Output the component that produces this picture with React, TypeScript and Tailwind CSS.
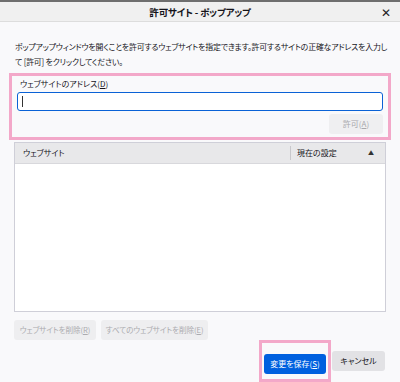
import * as React from "react";

const jp = "font-['Noto_Sans_CJK_JP','Noto_Sans',sans-serif] [font-feature-settings:'palt']";

export default function App() {
  return (
    <div className={`w-[400px] h-[382px] bg-[#f9f9fb] text-[#15141a] flex flex-col overflow-hidden ${jp}`}>
      {/* window top edge */}
      <div className="h-[2px] bg-[#6e6e6e]" />

      {/* title bar */}
      <div className="relative h-[21px] bg-[#f0f0f0] border-b border-[#dddddd] flex items-center justify-center">
        <span className="text-[9.5px] font-bold tracking-[-0.2px]">許可サイト - ポップアップ</span>
        <span className="absolute right-[9px] top-[3px] text-[12px] leading-[14px] text-[#222]">✕</span>
      </div>

      {/* description */}
      <div className="px-[15px] pt-[17px] text-[7.9px] leading-[15px] tracking-[-0.18px] whitespace-nowrap">
        <p>ポップアップウィンドウを開くことを許可するウェブサイトを指定できます。許可するサイトの正確なアドレスを入力し</p>
        <p>て [許可] をクリックしてください。</p>
      </div>

      {/* address box (highlighted) */}
      <div className="mx-[9px] mt-[4px] border-[3px] border-[#f3a8c9] px-[5px] pt-[2px] pb-[3px] flex flex-col">
        <label className="text-[8px] leading-[12px] pl-[3px]">
          ウェブサイトのアドレス(<span className="underline">D</span>)
        </label>
        <div className="mt-[2px] h-[19px] rounded-[3px] border-[1.5px] border-[#0a62d6] bg-white flex items-center pl-[4px]">
          <span className="w-px h-[11px] bg-[#333]" />
        </div>
        <div className="flex justify-end mt-[3px]">
          <button className="w-[54px] h-[20px] rounded-[3px] bg-[#efeff1] text-[8px] text-[#a8a8ac]">
            許可(<span className="underline">A</span>)
          </button>
        </div>
      </div>

      {/* site list */}
      <div className="mx-[14px] mt-[2px] h-[175px] border border-[#cfcfd8] bg-white flex flex-col">
        <div className="h-[21px] bg-[#e8e8ea] border-b border-[#d8d8dc] flex items-center text-[8px]">
          <div className="flex-1 pl-[8px]">ウェブサイト</div>
          <div className="w-[95px] h-[14px] border-l border-[#c8c8cc] flex items-center justify-between pl-[6px] pr-[11px]">
            <span>現在の設定</span>
            <span className="text-[6px] leading-none text-[#333]">▲</span>
          </div>
        </div>
        <div className="flex-1" />
      </div>

      {/* remove buttons */}
      <div className="mx-[14px] mt-[8px] flex gap-[5px]">
        <button className="h-[20px] w-[82px] rounded-[3px] bg-[#eeeef0] text-[7.6px] tracking-[-0.1px] text-[#ababaf]">
          ウェブサイトを削除(<span className="underline">R</span>)
        </button>
        <button className="h-[20px] w-[107px] rounded-[3px] bg-[#eeeef0] text-[7.6px] tracking-[-0.1px] text-[#ababaf]">
          すべてのウェブサイトを削除(<span className="underline">E</span>)
        </button>
      </div>

      {/* footer */}
      <div className="pr-[15px] flex justify-end items-center gap-px">
        <div className="border-[3px] border-[#f3a8c9] px-[2px] py-[5px]">
          <button className="h-[20px] w-[62px] rounded-[3px] bg-[#0060df] text-white text-[8px]">
            変更を保存(<span className="underline">S</span>)
          </button>
        </div>
        <button className="h-[20px] w-[53px] rounded-[3px] bg-[#e2e2e5] text-[8px]">
          キャンセル
        </button>
      </div>
    </div>
  );
}
